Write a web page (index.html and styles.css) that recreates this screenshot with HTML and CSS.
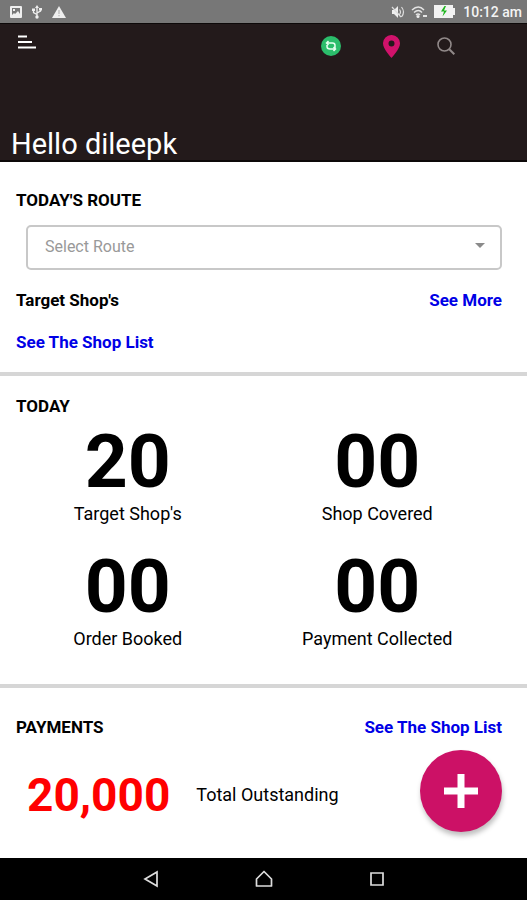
FILE: index.html
```html
<!DOCTYPE html>
<html lang="en">
<head>
<meta charset="utf-8">
<meta name="viewport" content="width=device-width, initial-scale=1">
<title>Dashboard</title>
<link rel="stylesheet" href="styles.css">
</head>
<body>
<div class="app">
  <div class="status">
    <div class="status-group status-left">
      <svg width="12" height="12" viewBox="0 0 12 12"><path fill="#eee" fill-rule="evenodd" d="M1 0h10a1 1 0 0 1 1 1v10a1 1 0 0 1-1 1H1a1 1 0 0 1-1-1V1a1 1 0 0 1 1-1zm1 2v7l2-2 1 1 3-3 2 3V2zm1 1h2v2H3z"/></svg>
      <svg width="10" height="14" viewBox="0 0 10 14" fill="none" stroke="#eee" stroke-width="1.3"><path d="M5 2v9M5 9.500L1.500 7.500V5M5 8l3.500-2V4"/><path fill="#eee" stroke="none" d="M5 0l2 3H3zM0 3.500h3v2.500H0zM7 3h3v2.500H7z"/><circle cx="5" cy="12" r="1.700" fill="#eee" stroke="none"/></svg>
      <svg width="14" height="12" viewBox="0 0 14 12"><path fill="#eee" d="M7 0l7 12H0z"/><path stroke="#bbb" stroke-width="1.300" d="M7 4v4M7 9v1.300"/></svg>
    </div>
    <div class="status-group status-right">
      <svg width="14" height="12" viewBox="0 0 14 12" fill="none" stroke="#ddd" stroke-width="1.200"><path fill="#eee" stroke="none" d="M1 4h2l4-4v12L3 8H1z"/><path d="M8.500 3.500q2 2.500 0 5M10.500 1q4 5 0 10M1 1l9 10"/></svg>
      <svg class="wifi" width="17" height="12" viewBox="0 0 17 12" fill="none" stroke="#e4e4e4" stroke-width="1.400"><path d="M1 4q6.500-6 12 0M3 6.500q4.500-4 8 0M5 9q2-2 4 0"/><circle cx="7" cy="10.500" r="1.500" fill="#eee" stroke="none"/><path stroke-width="2" d="M12 10h4"/></svg>
      <svg class="battery" width="21" height="13" viewBox="0 0 21 13"><path fill="#f2f2f2" d="M0 0h19v3h2v7h-2v3H0z"/><path fill="#1cb51c" d="M10.500 1L7 6.500h3L8.500 11.500 13 5.500h-3L12 1z"/></svg>
      <time class="clock">10:12 am</time>
    </div>
  </div>

  <header class="header">
    <div class="toolbar">
      <button class="icon-button" aria-label="Menu"><svg width="18" height="14" viewBox="0 0 18 14" stroke="#fff" stroke-width="2"><path d="M0 1.500h9M0 7h14M0 12.500h18"/></svg></button>
      <div class="actions">
        <button class="icon-button" aria-label="Sync"><svg width="20" height="20" viewBox="0 0 20 20" fill="none" stroke="#e6fff0" stroke-width="1.500"><circle cx="10" cy="10" r="10" fill="#2bbd6b" stroke="none"/><path d="M5.500 7h6q2.500 0 2.500 2.500V12M7.500 5l-2 2 2 2M14.500 13H9q-3 0-3-2.500V9M12.500 11l2 2-2 2"/></svg></button>
        <button class="icon-button pin" aria-label="Location"><svg width="17" height="23" viewBox="0 0 17 23"><path fill="#d0126b" fill-rule="evenodd" d="M8.500 0A8.300 8.300 0 0 0 0 8.500C0 14 8.500 23 8.500 23S17 14 17 8.500A8.300 8.300 0 0 0 8.500 0zm0 5.500a3 3 0 1 1 0 6 3 3 0 0 1 0-6z"/></svg></button>
        <button class="icon-button" aria-label="Search"><svg width="18" height="18" viewBox="0 0 18 18" fill="none" stroke="#918989" stroke-width="1.600"><circle cx="7.500" cy="7.500" r="6.500"/><path stroke-width="2" d="M12.300 12.300l5 5"/></svg></button>
      </div>
    </div>
    <h1 class="greeting">Hello dileepk</h1>
  </header>

  <main class="content">
    <section class="section route">
      <h2 class="title"><label for="route">TODAY'S ROUTE</label></h2>
      <div class="select-box">
        <select id="route" class="select"><option>Select Route</option></select>
        <svg class="caret" width="10" height="5" viewBox="0 0 10 5"><path fill="#8a8a8a" d="M0 0h10L5 5z"/></svg>
      </div>
      <div class="row">
        <h3 class="title">Target Shop's</h3>
        <a class="link" href="#more">See More</a>
      </div>
      <a class="link shop-list" href="#shops">See The Shop List</a>
    </section>

    <section class="section today">
      <h2 class="title">TODAY</h2>
      <div class="stats">
        <div class="stat"><strong class="number">20</strong><span>Target Shop's</span></div>
        <div class="stat"><strong class="number">00</strong><span>Shop Covered</span></div>
        <div class="stat"><strong class="number">00</strong><span>Order Booked</span></div>
        <div class="stat"><strong class="number">00</strong><span>Payment Collected</span></div>
      </div>
    </section>

    <section class="section payments">
      <div class="row">
        <h2 class="title">PAYMENTS</h2>
        <a class="link" href="#payments">See The Shop List</a>
      </div>
      <div class="outstanding">
        <strong class="amount">20,000</strong>
        <span>Total Outstanding</span>
        <button class="fab" aria-label="Add"><svg width="34" height="34" viewBox="0 0 34 34" stroke="#fff" stroke-width="7"><path d="M17 0v34M0 17h34"/></svg></button>
      </div>
    </section>
  </main>

  <nav class="navbar">
    <button class="icon-button" aria-label="Back"><svg width="16" height="18" viewBox="0 0 16 18" fill="none" stroke="#ddd" stroke-width="1.700"><path d="M14 2v14L2 9z"/></svg></button>
    <button class="icon-button" aria-label="Home"><svg width="18" height="18" viewBox="0 0 18 18" fill="none" stroke="#ddd" stroke-width="1.700" stroke-linejoin="round"><path d="M9 1.500l7.500 7.500v7h-15V9z"/></svg></button>
    <button class="icon-button" aria-label="Recent apps"><svg width="16" height="16" viewBox="0 0 16 16" fill="none" stroke="#ddd" stroke-width="1.700"><path d="M2 2h12v12H2z"/></svg></button>
  </nav>
</div>
</body>
</html>
```
FILE: styles.css
```css
* {
  box-sizing: border-box;
}

body {
  margin: 0;
  font: 18px/20px Roboto, sans-serif;
  color: #000;
  background: #fff;
}

h1, h2, h3 {
  margin: 0;
}

svg {
  display: block;
  flex: none;
}

.app {
  display: flex;
  flex-direction: column;
  min-height: 100vh;
}

.status {
  display: flex;
  justify-content: space-between;
  align-items: center;
  height: 23px;
  padding: 0 5px 0 10px;
  background: #777;
  color: #f4f4f4;
}

.status-group {
  display: flex;
  align-items: center;
}

.status-left {
  gap: 10px;
}

.status-right {
  gap: 6px;
}

.clock {
  margin-left: 2px;
  font-size: 14px;
  font-weight: 500;
}

.header {
  padding: 9px 72px 0 11px;
  background: #231a1b;
  border-top: 1px solid #0d0909;
  border-bottom: 2px solid #0d0909;
}

.toolbar {
  display: flex;
  justify-content: space-between;
  align-items: center;
  height: 25px;
  padding-left: 7px;
}

.icon-button {
  display: grid;
  place-items: center;
  padding: 0;
  border: 0;
  background: none;
}

.toolbar > .icon-button {
  align-self: flex-start;
  padding-top: 2px;
}

.actions {
  display: flex;
  align-items: center;
}

.pin {
  margin: 2px 37px 0 42px;
}

.greeting {
  padding: 70px 0 0;
  font-size: 29px;
  line-height: 32px;
  font-weight: 400;
  color: #fff;
}

.content {
  display: flex;
  flex: 1;
  flex-direction: column;
}

.section {
  padding: 20px 25px 20px 16px;
  border-bottom: 4px solid #d6d6d6;
}

.title,
.link {
  font-size: 17px;
  line-height: 20px;
  font-weight: 700;
}

.link {
  color: #0000e6;
  text-decoration: none;
}

.route {
  padding-top: 28px;
}

.select-box {
  display: grid;
  align-items: center;
  margin: 15px 0 20px 10px;
}

.select,
.caret {
  grid-area: 1 / 1;
}

.select {
  appearance: none;
  width: 100%;
  height: 45px;
  padding: 0 17px 1px;
  border: 2px solid #c8c8c8;
  border-radius: 5px;
  background: #fff;
  color: #999;
  font: 16px/20px Roboto, sans-serif;
}

.caret {
  justify-self: end;
  margin: 0 17px 4px 0;
  pointer-events: none;
}

.row {
  display: flex;
  justify-content: space-between;
}

.shop-list {
  display: block;
  margin-top: 22px;
}

.today {
  padding-bottom: 35px;
}

.stats {
  display: grid;
  grid-template-columns: 1fr 1fr;
  row-gap: 24px;
  margin: 7px 0 0 -13px;
}

.stat {
  display: flex;
  flex-direction: column;
  align-items: center;
}

.number {
  margin-bottom: 5px;
  font-size: 75px;
  line-height: 76px;
}

.payments {
  flex: 1;
  padding-top: 29px;
  border-bottom: 0;
}

.outstanding {
  display: flex;
  align-items: center;
  margin-top: 13px;
  padding: 8px 0 0 11px;
}

.amount {
  margin-right: 26px;
  font-size: 46px;
  line-height: 54px;
  color: #f00;
}

.fab {
  display: grid;
  place-items: center;
  width: 82px;
  height: 82px;
  margin: -8px 0 0 auto;
  padding: 0;
  border: 0;
  border-radius: 50%;
  background: #cc1166;
  box-shadow: 1px 4px 5px rgba(0, 0, 0, .25);
}

.navbar {
  display: flex;
  justify-content: center;
  align-items: center;
  gap: 96px;
  height: 42px;
  background: #000;
}
```
